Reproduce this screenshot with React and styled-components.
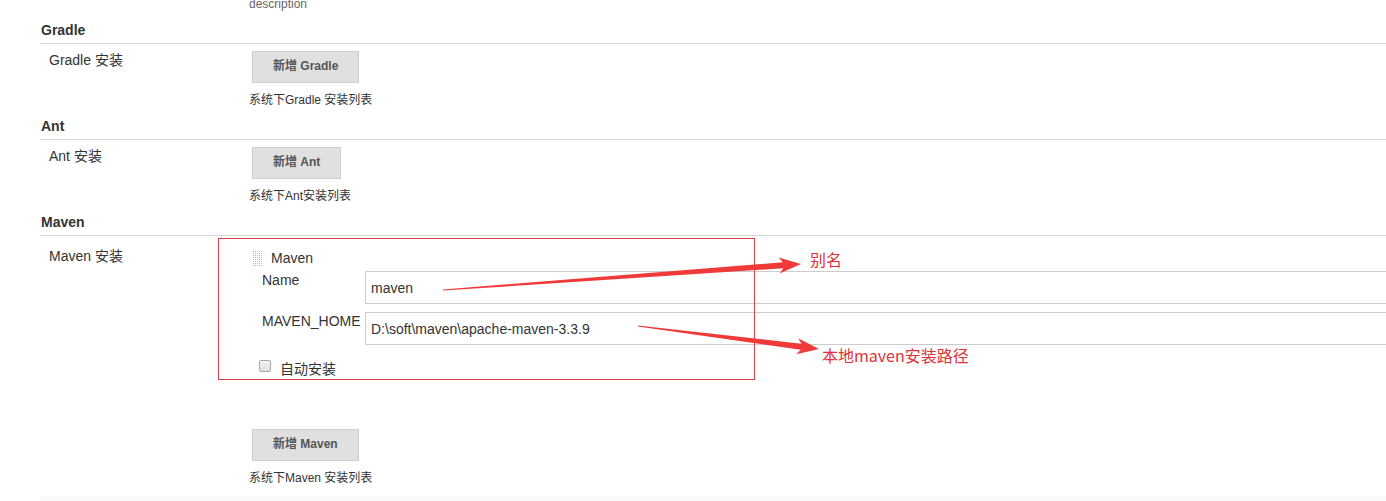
import React from "react";
import styled, { createGlobalStyle } from "styled-components";

const Global = createGlobalStyle`
  html, body { margin: 0; padding: 0; background: #fff; overflow: hidden; }
  body { font-family: "Liberation Sans", Arial, "Noto Sans CJK SC", sans-serif; color: #333; }
`;

const Page = styled.div`
  position: relative;
  width: 1386px;
  height: 501px;
  overflow: hidden;
  padding-left: 40px;
  box-sizing: border-box;
`;

const SectionHeader = styled.div`
  margin-top: 9px;
  padding: 0 0 4px 1px;
  font-size: 14px;
  line-height: 18px;
  font-weight: bold;
  color: #333;
  border-bottom: 1px solid #d6d6d6;
`;

const Row = styled.div`
  display: grid;
  grid-template-columns: 209px 1fr;
  margin-top: ${(p) => p.$mt || 0}px;
`;

const Label = styled.div`
  padding-left: 9px;
  padding-top: ${(p) => p.$top ?? 7}px;
  font-size: 14px;
  line-height: 18px;
  color: #333;
`;

const Cell = styled.div`
  display: flex;
  flex-direction: column;
  align-items: flex-start;
  min-width: 0;
`;

const Help = styled.div`
  margin-top: ${(p) => p.$mt ?? 9}px;
  font-size: 12px;
  line-height: 16px;
  color: ${(p) => (p.$muted ? "#666" : "#333")};
`;

const AddButton = styled.button`
  box-sizing: border-box;
  margin: ${(p) => p.$mt ?? 7}px 0 0 3px;
  height: 32px;
  padding: 0 20px 2px;
  display: flex;
  align-items: center;
  background: #e0e0e0;
  border: 1px solid #cfcfcf;
  border-radius: 0;
  font-family: "Liberation Sans", Arial, "Noto Sans CJK SC", sans-serif;
  font-size: 12px;
  line-height: 14px;
  font-weight: bold;
  color: #555;
  white-space: nowrap;
  cursor: pointer;
`;

const ItemHead = styled.div`
  margin-top: 12px;
  height: 20px;
  display: flex;
  align-items: center;
  gap: 8px;
  padding-left: 4px;
  font-size: 14px;
  color: #333;
`;

const FieldGrid = styled.div`
  align-self: stretch;
  margin-top: 3px;
  padding-left: 13px;
  display: grid;
  grid-template-columns: 103px 1fr;
  row-gap: 8px;
`;

const FieldLabel = styled.div`
  font-size: 14px;
  line-height: 18px;
  color: #333;
`;

const TextInput = styled.input`
  box-sizing: border-box;
  width: calc(100% + 40px);
  height: 33px;
  border: 1px solid #cccccc;
  border-radius: 0;
  padding: 0 5px;
  font-family: "Liberation Sans", Arial, sans-serif;
  font-size: 14px;
  color: #333;
  background: #fff;
  outline: none;
`;

const CheckRow = styled.label`
  margin-top: 13px;
  height: 20px;
  display: flex;
  align-items: center;
  gap: 9px;
  padding-left: 10px;
  font-size: 14px;
  color: #333;
`;

const CheckBox = styled.span`
  width: 10px;
  height: 10px;
  margin-bottom: 5px;
  border: 1px solid #a8a8a8;
  border-radius: 2px;
  background: linear-gradient(#f4f4f4, #dedede);
`;

const BottomBand = styled.div`
  margin-top: 10px;
  height: 10px;
  background: #f9f9f9;
`;

const Overlay = styled.svg`
  position: absolute;
  left: 0;
  top: 0;
  pointer-events: none;
`;

const Note = styled.span`
  position: absolute;
  font-family: "Noto Sans CJK SC", "Liberation Sans", sans-serif;
  font-size: 16px;
  line-height: 20px;
  color: #e0303a;
  white-space: nowrap;
`;

const Handle = () => (
  <svg width="10" height="15" viewBox="0 0 10 15">
    {Array.from({ length: 5 }).map((_, c) =>
      Array.from({ length: 8 }).map((_, r) => (
        <rect key={`${c}-${r}`} x={c * 2} y={r * 2} width="1" height="1" fill="#b8b8b8" />
      ))
    )}
  </svg>
);

function arrowPoints(x1, y1, x2, y2, headLen = 18, headW = 8, shaftW = 3) {
  const dx = x2 - x1;
  const dy = y2 - y1;
  const L = Math.hypot(dx, dy);
  const ux = dx / L;
  const uy = dy / L;
  const nx = -uy;
  const ny = ux;
  const bx = x2 - ux * headLen;
  const by = y2 - uy * headLen;
  const nbx = bx - ux * 4;
  const nby = by - uy * 4;
  const p = [
    [x1 + nx * 0.6, y1 + ny * 0.6],
    [bx + nx * shaftW, by + ny * shaftW],
    [nbx + nx * headW, nby + ny * headW],
    [x2, y2],
    [nbx - nx * headW, nby - ny * headW],
    [bx - nx * shaftW, by - ny * shaftW],
    [x1 - nx * 0.6, y1 - ny * 0.6],
  ];
  return p.map((q) => q.map((v) => v.toFixed(1)).join(",")).join(" ");
}

export default function App() {
  return (
    <>
      <Global />
      <Page>
        <Row $mt={-4}>
          <div />
          <Cell>
            <Help $mt={0} $muted>description</Help>
          </Cell>
        </Row>

        <SectionHeader>Gradle</SectionHeader>
        <Row>
          <Label>Gradle 安装</Label>
          <Cell>
            <AddButton>新增 Gradle</AddButton>
            <Help>系统下Gradle 安装列表</Help>
          </Cell>
        </Row>

        <SectionHeader>Ant</SectionHeader>
        <Row>
          <Label>Ant 安装</Label>
          <Cell>
            <AddButton>新增 Ant</AddButton>
            <Help>系统下Ant安装列表</Help>
          </Cell>
        </Row>

        <SectionHeader>Maven</SectionHeader>
        <Row>
          <Label $top={11}>Maven 安装</Label>
          <Cell>
            <ItemHead>
              <Handle />
              <span>Maven</span>
            </ItemHead>
            <FieldGrid>
              <FieldLabel>Name</FieldLabel>
              <TextInput defaultValue="maven" />
              <FieldLabel>MAVEN_HOME</FieldLabel>
              <TextInput defaultValue="D:\soft\maven\apache-maven-3.3.9" />
            </FieldGrid>
            <CheckRow>
              <CheckBox />
              <span>自动安装</span>
            </CheckRow>
            <AddButton $mt={51}>新增 Maven</AddButton>
            <Help>系统下Maven 安装列表</Help>
          </Cell>
        </Row>
        <BottomBand />

        <Overlay width="1386" height="501" viewBox="0 0 1386 501">
          <rect x="218.5" y="238.5" width="536" height="141" fill="none" stroke="#d9404a" strokeWidth="1" />
          <polygon points={arrowPoints(443, 290, 801, 264)} fill="#f03a3a" />
          <polygon points={arrowPoints(638, 326, 819, 349)} fill="#f03a3a" />
        </Overlay>
        <Note style={{ left: 810, top: 249 }}>别名</Note>
        <Note style={{ left: 822, top: 345 }}>本地maven安装路径</Note>
      </Page>
    </>
  );
}
